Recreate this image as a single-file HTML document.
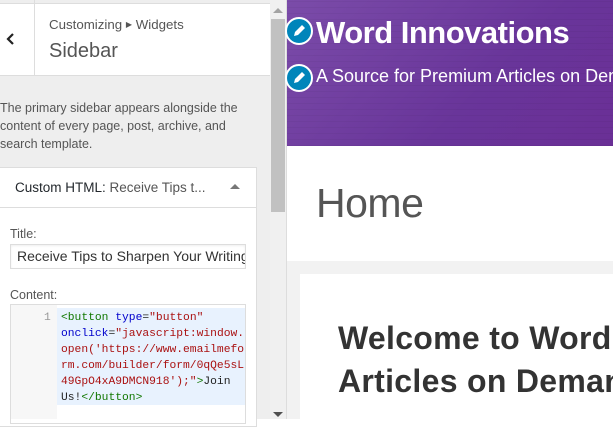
<!DOCTYPE html>
<html><head><meta charset="utf-8"><style>
*{margin:0;padding:0;box-sizing:border-box}
body{width:613px;height:419px;overflow:hidden;position:relative;font-family:"Liberation Sans",sans-serif;background:#fff}
.a{position:absolute}
.mono{font-family:"Liberation Mono",monospace;font-size:11.3px;line-height:16px;white-space:pre}
</style></head><body>
<div class="a" style="left:0;top:0;width:270px;height:419px;background:#eee"></div>
<div class="a" style="left:0;top:3px;width:270px;height:73px;background:#fff;border-top:1px solid #ddd;border-bottom:1px solid #ddd"></div>
<div class="a" style="left:34px;top:0;width:1px;height:76px;background:#ddd"></div>
<svg class="a" style="left:5px;top:31px" width="12" height="16"><path d="M8 3 L3 8 L8 13" stroke="#222" stroke-width="2.2" fill="none"/></svg>
<div class="a" style="left:49px;top:17px;font-size:13.3px;color:#555">Customizing <span style="font-size:8px;vertical-align:2px">▶</span> Widgets</div>
<div class="a" style="left:49px;top:40px;font-size:20px;color:#555">Sidebar</div>
<div class="a" style="left:0;top:99px;width:262px;font-size:12.5px;line-height:18px;color:#555">The primary sidebar appears alongside the content of every page, post, archive, and search template.</div>
<div class="a" style="left:0;top:167px;width:257px;height:260px;background:#fff;border:1px solid #ddd;border-left:none"></div>
<div class="a" style="left:0;top:207px;width:257px;height:1px;background:#ddd"></div>
<div class="a" style="left:15px;top:180px;font-size:13.5px;color:#23282d">Custom HTML: <span style="color:#555">Receive Tips t...</span></div>
<svg class="a" style="left:230px;top:183px" width="10" height="8"><path d="M0 6 L5 1 L10 6Z" fill="#777"/></svg>
<div class="a" style="left:10px;top:227px;font-size:12.5px;color:#555">Title:</div>
<div class="a" style="left:10px;top:244px;width:236px;height:25px;border:1px solid #ddd;font-size:14px;color:#333;padding:3px 6px;white-space:nowrap;overflow:hidden;box-shadow:inset 0 1px 2px rgba(0,0,0,.07)">Receive Tips to Sharpen Your Writing</div>
<div class="a" style="left:10px;top:288px;font-size:12.5px;color:#555">Content:</div>
<div class="a" style="left:10px;top:304px;width:236px;height:120px;border:1px solid #ddd;background:#fff"></div>
<div class="a" style="left:11px;top:305px;width:46px;height:114px;background:#f7f7f7"></div>
<div class="a mono" style="left:44px;top:310px;color:#999">1</div>
<div class="a" style="left:57px;top:308px;width:188px;height:97px;background:#e8f2fe"></div>
<div class="a mono" style="left:61px;top:310px;color:#222"><span style="color:#170">&lt;button</span> <span style="color:#00c">type</span>=<span style="color:#a11">"button"</span>
<span style="color:#00c">onclick</span>=<span style="color:#a11">"javascript:window.
open('https://www.emailmefo
rm.com/builder/form/0qQe5sL
49GpO4xA9DMCN918');"</span><span style="color:#170">&gt;</span>Join
Us!<span style="color:#170">&lt;/button&gt;</span></div>
<div class="a" style="left:270px;top:0;width:17px;height:419px;background:#f0f0f0;border-right:1px solid #ddd"></div>
<div class="a" style="left:271px;top:19px;width:14px;height:193px;background:#c1c1c1"></div>
<svg class="a" style="left:273px;top:8px" width="10" height="6"><path d="M0 5 L5 0 L10 5Z" fill="#a3a3a3"/></svg>
<svg class="a" style="left:273px;top:412px" width="10" height="6"><path d="M0 0 L5 5 L10 0Z" fill="#505050"/></svg>
<div class="a" style="left:287px;top:0;width:326px;height:146px;background-image:repeating-linear-gradient(0deg,rgba(0,0,0,.04) 0 1px,transparent 1px 6px),linear-gradient(135deg,#7b4ca9,#69359a 60%,#6a2f96)"></div>
<div class="a" style="left:316px;top:15px;font-size:31px;font-weight:bold;color:#fff;letter-spacing:-0.5px;white-space:nowrap">Word Innovations</div>
<div class="a" style="left:316px;top:66px;font-size:18px;color:#fff;white-space:nowrap">A Source for Premium Articles on Demand</div>
<svg class="a" style="left:285px;top:17px" width="30" height="30"><circle cx="14" cy="14" r="13" fill="#0085ba" stroke="#fff" stroke-width="2"/><path d="M9 19 L10 15 L17 8 L20 11 L13 18Z" fill="#fff"/></svg>
<svg class="a" style="left:285px;top:64px" width="30" height="30"><circle cx="14" cy="14" r="13" fill="#0085ba" stroke="#fff" stroke-width="2"/><path d="M9 19 L10 15 L17 8 L20 11 L13 18Z" fill="#fff"/></svg>
<div class="a" style="left:316px;top:180px;font-size:41px;color:#555;letter-spacing:-0.5px">Home</div>
<div class="a" style="left:287px;top:261px;width:326px;height:158px;background:#f2f2f2"></div>
<div class="a" style="left:300px;top:274px;width:313px;height:145px;background:#fff"></div>
<div class="a" style="left:338px;top:317px;font-size:32px;font-weight:bold;color:#333;line-height:43px;white-space:nowrap;letter-spacing:0.3px">Welcome to Word<br>Articles on Demand</div>
</body></html>
